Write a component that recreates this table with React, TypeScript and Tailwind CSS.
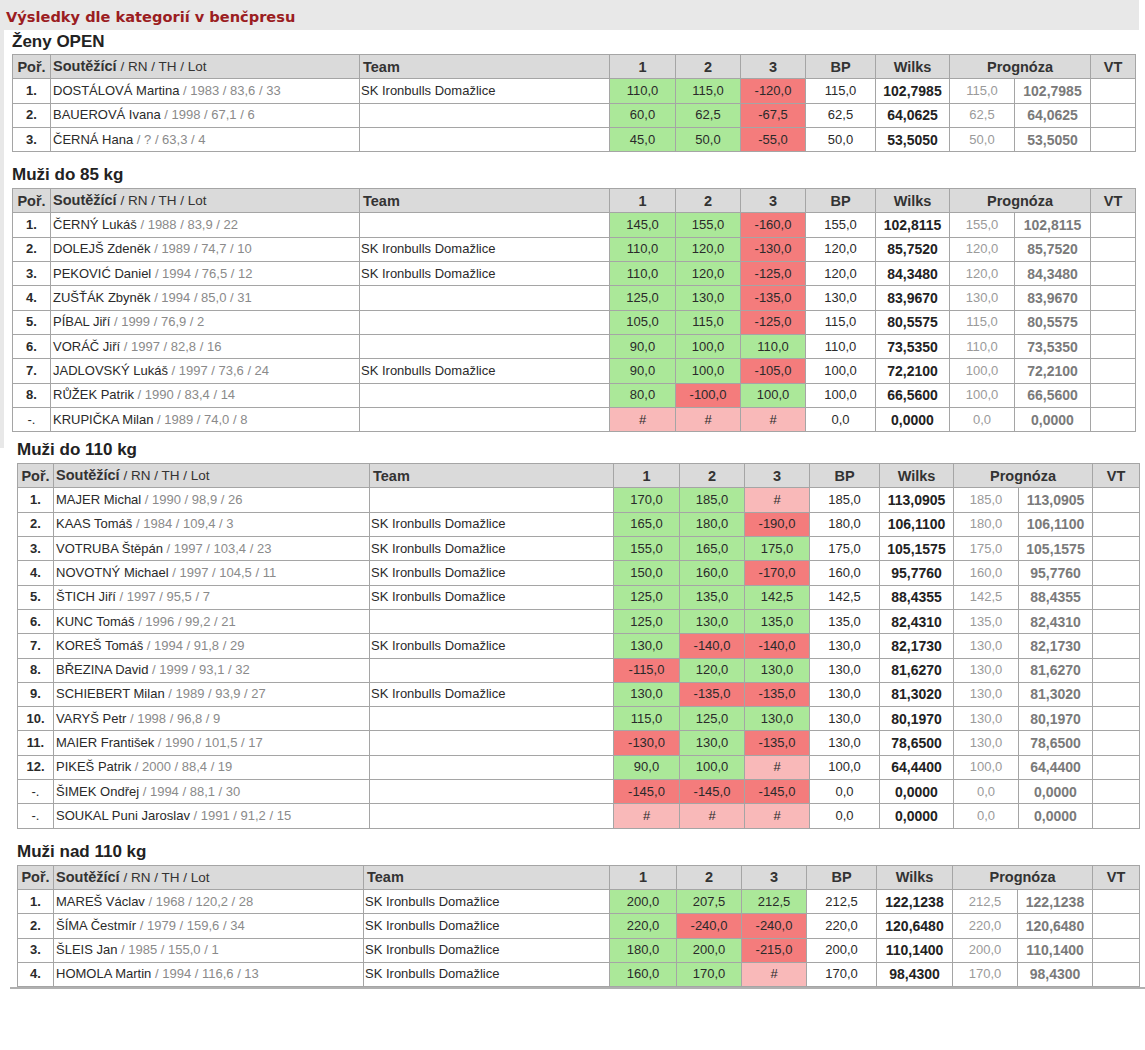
import React from 'react';

type Row = [string, string, string, string, string, string, string, string, string];

const SK = 'SK Ironbulls Domažlice';

const zeny: Row[] = [
  ['1.', 'DOSTÁLOVÁ Martina', ' / 1983 / 83,6 / 33', SK, '110,0', '115,0', '-120,0', '115,0', '102,7985'],
  ['2.', 'BAUEROVÁ Ivana', ' / 1998 / 67,1 / 6', '', '60,0', '62,5', '-67,5', '62,5', '64,0625'],
  ['3.', 'ČERNÁ Hana', ' / ? / 63,3 / 4', '', '45,0', '50,0', '-55,0', '50,0', '53,5050'],
];

const m85: Row[] = [
  ['1.', 'ČERNÝ Lukáš', ' / 1988 / 83,9 / 22', '', '145,0', '155,0', '-160,0', '155,0', '102,8115'],
  ['2.', 'DOLEJŠ Zdeněk', ' / 1989 / 74,7 / 10', SK, '110,0', '120,0', '-130,0', '120,0', '85,7520'],
  ['3.', 'PEKOVIĆ Daniel', ' / 1994 / 76,5 / 12', SK, '110,0', '120,0', '-125,0', '120,0', '84,3480'],
  ['4.', 'ZUŠŤÁK Zbyněk', ' / 1994 / 85,0 / 31', '', '125,0', '130,0', '-135,0', '130,0', '83,9670'],
  ['5.', 'PÍBAL Jiří', ' / 1999 / 76,9 / 2', '', '105,0', '115,0', '-125,0', '115,0', '80,5575'],
  ['6.', 'VORÁČ Jiří', ' / 1997 / 82,8 / 16', '', '90,0', '100,0', '110,0', '110,0', '73,5350'],
  ['7.', 'JADLOVSKÝ Lukáš', ' / 1997 / 73,6 / 24', SK, '90,0', '100,0', '-105,0', '100,0', '72,2100'],
  ['8.', 'RŮŽEK Patrik', ' / 1990 / 83,4 / 14', '', '80,0', '-100,0', '100,0', '100,0', '66,5600'],
  ['-.', 'KRUPIČKA Milan', ' / 1989 / 74,0 / 8', '', '#', '#', '#', '0,0', '0,0000'],
];

const m110: Row[] = [
  ['1.', 'MAJER Michal', ' / 1990 / 98,9 / 26', '', '170,0', '185,0', '#', '185,0', '113,0905'],
  ['2.', 'KAAS Tomáš', ' / 1984 / 109,4 / 3', SK, '165,0', '180,0', '-190,0', '180,0', '106,1100'],
  ['3.', 'VOTRUBA Štěpán', ' / 1997 / 103,4 / 23', SK, '155,0', '165,0', '175,0', '175,0', '105,1575'],
  ['4.', 'NOVOTNÝ Michael', ' / 1997 / 104,5 / 11', SK, '150,0', '160,0', '-170,0', '160,0', '95,7760'],
  ['5.', 'ŠTICH Jiří', ' / 1997 / 95,5 / 7', SK, '125,0', '135,0', '142,5', '142,5', '88,4355'],
  ['6.', 'KUNC Tomáš', ' / 1996 / 99,2 / 21', '', '125,0', '130,0', '135,0', '135,0', '82,4310'],
  ['7.', 'KOREŠ Tomáš', ' / 1994 / 91,8 / 29', SK, '130,0', '-140,0', '-140,0', '130,0', '82,1730'],
  ['8.', 'BŘEZINA David', ' / 1999 / 93,1 / 32', '', '-115,0', '120,0', '130,0', '130,0', '81,6270'],
  ['9.', 'SCHIEBERT Milan', ' / 1989 / 93,9 / 27', SK, '130,0', '-135,0', '-135,0', '130,0', '81,3020'],
  ['10.', 'VARYŠ Petr', ' / 1998 / 96,8 / 9', '', '115,0', '125,0', '130,0', '130,0', '80,1970'],
  ['11.', 'MAIER František', ' / 1990 / 101,5 / 17', '', '-130,0', '130,0', '-135,0', '130,0', '78,6500'],
  ['12.', 'PIKEŠ Patrik', ' / 2000 / 88,4 / 19', '', '90,0', '100,0', '#', '100,0', '64,4400'],
  ['-.', 'ŠIMEK Ondřej', ' / 1994 / 88,1 / 30', '', '-145,0', '-145,0', '-145,0', '0,0', '0,0000'],
  ['-.', 'SOUKAL Puni Jaroslav', ' / 1991 / 91,2 / 15', '', '#', '#', '#', '0,0', '0,0000'],
];

const m110plus: Row[] = [
  ['1.', 'MAREŠ Václav', ' / 1968 / 120,2 / 28', SK, '200,0', '207,5', '212,5', '212,5', '122,1238'],
  ['2.', 'ŠÍMA Čestmír', ' / 1979 / 159,6 / 34', SK, '220,0', '-240,0', '-240,0', '220,0', '120,6480'],
  ['3.', 'ŠLEIS Jan', ' / 1985 / 155,0 / 1', SK, '180,0', '200,0', '-215,0', '200,0', '110,1400'],
  ['4.', 'HOMOLA Martin', ' / 1994 / 116,6 / 13', SK, '160,0', '170,0', '#', '170,0', '98,4300'],
];

const colsA = ['w-[38px]', 'w-[309px]', 'w-[250px]', 'w-[66px]', 'w-[65px]', 'w-[65px]', 'w-[70px]', 'w-[74px]', 'w-[65px]', 'w-[76px]', 'w-[45px]'];
const colsB = ['w-[36px]', 'w-[316px]', 'w-[244px]', 'w-[66px]', 'w-[65px]', 'w-[65px]', 'w-[70px]', 'w-[74px]', 'w-[65px]', 'w-[74px]', 'w-[47px]'];
const colsC = ['w-[36px]', 'w-[310px]', 'w-[246px]', 'w-[67px]', 'w-[65px]', 'w-[65px]', 'w-[70px]', 'w-[76px]', 'w-[65px]', 'w-[75px]', 'w-[47px]'];

function attemptBg(v: string) {
  if (v === '#') return 'bg-[#f9b9b9]';
  if (v.startsWith('-')) return 'bg-[#f47c7c]';
  return 'bg-[#abe899]';
}

const td = 'border border-[#a5a5a5] h-[24.3px] p-0 leading-[16px]';
const th = 'border border-[#a5a5a5] h-[24.3px] p-0 bg-[#dadada] font-bold text-[#333] text-[14.5px] leading-[16px]';

function ResultTable({ rows, cols, width }: { rows: Row[]; cols: string[]; width: string }) {
  return (
    <table className={`border-collapse table-fixed text-[13px] text-[#2a2a2a] ${width}`}>
      <colgroup>
        {cols.map((c, i) => (
          <col key={i} className={c} />
        ))}
      </colgroup>
      <thead>
        <tr>
          <th className={`${th} text-center`}>Poř.</th>
          <th className={`${th} text-left pl-[2px]`}>
            Soutěžící<span className="font-normal text-[13.5px]"> / RN / TH / Lot</span>
          </th>
          <th className={`${th} text-left pl-[3px]`}>Team</th>
          <th className={`${th} text-center`}>1</th>
          <th className={`${th} text-center`}>2</th>
          <th className={`${th} text-center`}>3</th>
          <th className={`${th} text-center`}>BP</th>
          <th className={`${th} text-center`}>Wilks</th>
          <th className={`${th} text-center`} colSpan={2}>
            Prognóza
          </th>
          <th className={`${th} text-center`}>VT</th>
        </tr>
      </thead>
      <tbody>
        {rows.map((r, i) => (
          <tr key={i}>
            <td className={`${td} text-center ${r[0] === '-.' ? 'font-normal' : 'font-bold'}`}>{r[0]}</td>
            <td className={`${td} pl-[2px] whitespace-nowrap overflow-hidden`}>
              {r[1]}
              <span className="text-[#8a8a8a]">{r[2]}</span>
            </td>
            <td className={`${td} pl-[1px] whitespace-nowrap`}>{r[3]}</td>
            <td className={`${td} text-center ${attemptBg(r[4])}`}>{r[4]}</td>
            <td className={`${td} text-center ${attemptBg(r[5])}`}>{r[5]}</td>
            <td className={`${td} text-center ${attemptBg(r[6])}`}>{r[6]}</td>
            <td className={`${td} text-center`}>{r[7]}</td>
            <td className={`${td} text-center font-bold text-[14px] text-[#222]`}>{r[8]}</td>
            <td className={`${td} text-center text-[#9a9a9a]`}>{r[7]}</td>
            <td className={`${td} text-center font-bold text-[14px] text-[#7a7a7a]`}>{r[8]}</td>
            <td className={td}></td>
          </tr>
        ))}
      </tbody>
    </table>
  );
}

function Heading({ children, className }: { children: React.ReactNode; className: string }) {
  return <div className={`text-[17px] leading-[20px] font-bold text-[#222] ${className}`}>{children}</div>;
}

export default function App() {
  return (
    <div className="w-[1145px] h-[1050px] bg-white font-['Liberation_Sans',Arial,sans-serif]">
      <div className="w-[1139px] h-[30px] bg-[#e8e8e8] pl-[6px] pt-[7px] font-['DejaVu_Sans',Verdana,sans-serif] text-[14.6px] leading-[20px] font-bold text-[#9b1d22]">
        Výsledky dle kategorií v benčpresu
      </div>
      <div className="border-l-4 border-[#e8e8e8] pl-[8px] pb-[16px]">
        <Heading className="pt-[2px] mb-[2px]">Ženy OPEN</Heading>
        <ResultTable rows={zeny} cols={colsA} width="w-[1123px]" />
        <Heading className="mt-[13px] mb-[3px]">Muži do 85 kg</Heading>
        <ResultTable rows={m85} cols={colsA} width="w-[1123px]" />
      </div>
      <div className="pl-[17px] -mt-[10px]">
        <Heading className="pt-[2px] mb-[3px]">Muži do 110 kg</Heading>
        <ResultTable rows={m110} cols={colsB} width="w-[1122px]" />
        <Heading className="mt-[13px] mb-[3px]">Muži nad 110 kg</Heading>
        <ResultTable rows={m110plus} cols={colsC} width="w-[1122px]" />
      </div>
      <div className="ml-[10px] h-[2px] bg-[#b0b0b0]" />
    </div>
  );
}
